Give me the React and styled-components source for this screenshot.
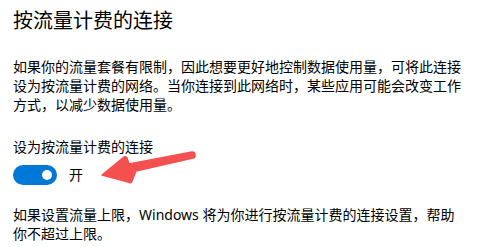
import React from 'react'
import styled, { createGlobalStyle } from 'styled-components'

const GlobalStyle = createGlobalStyle`
  html, body {
    margin: 0;
    padding: 0;
    background: #ffffff;
  }
  body {
    font-family: "Noto Sans", "Noto Sans CJK SC", sans-serif;
    color: #000000;
  }
`

export default function App() {
  return (
    <>
      <GlobalStyle />
      <Page>
        <Title>按流量计费的连接</Title>
        <Paragraph>
          如果你的流量套餐有限制，因此想要更好地控制数据使用量，可将此连接设为按流量计费的网络。当你连接到此网络时，某些应用可能会改变工作方式，以减少数据使用量。
        </Paragraph>
        <Label>设为按流量计费的连接</Label>
        <ToggleRow>
          <Toggle $on>
            <Knob $on />
          </Toggle>
          <ToggleText>开</ToggleText>
        </ToggleRow>
        <Note>
          如果设置流量上限，Windows 将为你进行按流量计费的连接设置，帮助你不超过上限。
        </Note>
        <Arrow viewBox="0 0 495 247" aria-hidden="true">
          <path
            d="M102 175 L124 157 Q126 156 127 158 L129 164 L192 152 Q195 152 195 155 L195 156 Q195 158 193 158 L136 171 L132 181 Q131 184 128 182 Z"
            fill="#f55050"
            stroke="#f55050"
            strokeWidth="1.5"
            strokeLinejoin="round"
          />
        </Arrow>
      </Page>
    </>
  )
}

const Page = styled.div`
  position: relative;
  width: 495px;
  height: 247px;
  padding: 7px 0 0 13px;
  box-sizing: border-box;
  overflow: hidden;
`

const Title = styled.h1`
  margin: 0;
  font-size: 20px;
  line-height: 28px;
  font-weight: 400;
`

const Paragraph = styled.p`
  margin: 22px 0 0;
  width: 460px;
  font-size: 14px;
  line-height: 19px;
`

const Label = styled.div`
  margin-top: 23px;
  font-size: 14px;
  line-height: 19px;
`

const ToggleRow = styled.div`
  display: flex;
  align-items: center;
  gap: 12px;
  margin-top: 9px;
  height: 20px;
`

const Toggle = styled.div`
  position: relative;
  width: 44px;
  height: 20px;
  border-radius: 10px;
  background: ${p => (p.$on ? '#0078d7' : '#ffffff')};
  box-sizing: border-box;
`

const Knob = styled.span`
  position: absolute;
  top: 5px;
  left: ${p => (p.$on ? '29px' : '5px')};
  width: 10px;
  height: 10px;
  border-radius: 50%;
  background: ${p => (p.$on ? '#ffffff' : '#000000')};
`

const ToggleText = styled.span`
  font-size: 14px;
  line-height: 20px;
`

const Note = styled.p`
  margin: 20px 0 0;
  width: 455px;
  font-size: 14px;
  line-height: 19px;
`

const Arrow = styled.svg`
  position: absolute;
  left: 0;
  top: 0;
  width: 495px;
  height: 247px;
  pointer-events: none;
`
